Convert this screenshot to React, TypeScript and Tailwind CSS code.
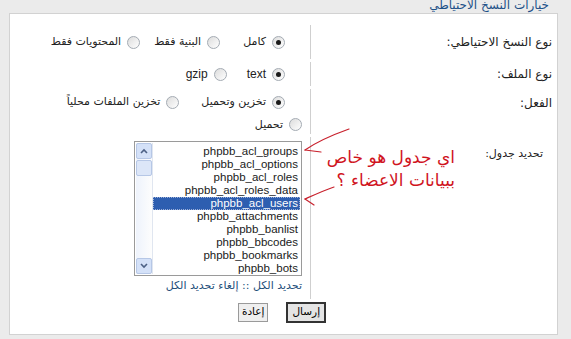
import React from "react";

const tables = [
  "phpbb_acl_groups",
  "phpbb_acl_options",
  "phpbb_acl_roles",
  "phpbb_acl_roles_data",
  "phpbb_acl_users",
  "phpbb_attachments",
  "phpbb_banlist",
  "phpbb_bbcodes",
  "phpbb_bookmarks",
  "phpbb_bots",
];

const Radio: React.FC<{ checked?: boolean }> = ({ checked }) => (
  <span className="inline-flex w-[13px] h-[13px] shrink-0 rounded-full border border-[#a4abb3] bg-gradient-to-br from-[#dcdcdc] to-white items-center justify-center">
    {checked && <span className="w-[5px] h-[5px] rounded-full bg-[#1a1a1a]" />}
  </span>
);

const Option: React.FC<{ text: string; checked?: boolean; className?: string }> = ({ text, checked, className }) => (
  <label className={"flex items-center gap-[6px] " + (className ?? "")}>
    <Radio checked={checked} />
    <span>{text}</span>
  </label>
);

// hand drawn red arrows pointing at the list
const Arrows = () => (
  <svg className="absolute left-0 top-0" width="571" height="339" viewBox="0 0 571 339" fill="none">
    <g stroke="#c8202c" strokeWidth="1.2" strokeLinecap="round">
      <path d="M349 129 C 335 134, 318 141, 305 150" />
      <path d="M305 150 L 321 152" />
      <path d="M334 187 C 325 190, 314 195, 305 199" />
      <path d="M305 199 L 314 205" />
    </g>
  </svg>
);

const App: React.FC = () => {
  return (
    <div className="relative w-[571px] h-[339px] overflow-hidden bg-[#ebebeb] font-['DejaVu_Sans',sans-serif] text-[11px] text-[#222]" dir="rtl">
      <div className="h-[13px] pr-[22px] text-[12px] leading-[14px] text-[#1d5188] -mt-[2px] mb-[2px]">
        خيارات النسخ الاحتياطي
      </div>
      <div className="mr-[13px] ml-[9px] h-[322px] bg-white border border-[#d2d2d2] flex flex-col pt-[11px]">
        {/* row 1 */}
        <div className="flex h-[34px] mb-[3px]">
          <div className="w-[247px] shrink-0 border-l border-[#cfcfcf] flex items-center pr-[5px] text-[12px]">
            نوع النسخ الاحتياطي:
          </div>
          <div className="flex items-center pr-[25px]">
            <Option text="كامل" checked className="ml-[23px]" />
            <Option text="البنية فقط" className="ml-[14px]" />
            <Option text="المحتويات فقط" />
          </div>
        </div>
        {/* row 2 */}
        <div className="flex h-[24px] mb-[3px]">
          <div className="w-[247px] shrink-0 border-l border-[#cfcfcf] flex items-center pr-[5px] text-[12px]">
            نوع الملف:
          </div>
          <div className="flex items-center pr-[25px] font-['Liberation_Sans','DejaVu_Sans',sans-serif] text-[12px]">
            <Option text="text" checked className="ml-[20px]" />
            <Option text="gzip" />
          </div>
        </div>
        {/* row 3 */}
        <div className="flex h-[45px] mb-[3px]">
          <div className="w-[247px] shrink-0 border-l border-[#cfcfcf] flex items-start pt-[5px] pr-[5px] text-[12px]">
            الفعل:
          </div>
          <div className="flex flex-col pr-[8px] pt-[5px] gap-[6px]">
            <div className="flex items-center pr-[17px]">
              <Option text="تخزين وتحميل" checked className="ml-[22px]" />
              <Option text="تخزين الملفات محلياً" />
            </div>
            <Option text="تحميل" />
          </div>
        </div>
        {/* row 4 */}
        <div className="flex">
          <div className="w-[247px] shrink-0 border-l border-[#cfcfcf] pr-[14px] pt-[9px] text-[11px]">
            تحديد جدول:
          </div>
          <div className="flex flex-col pr-[8px] pt-[4px] pb-[4px]">
            <div className="w-[168px] h-[135px] border border-[#9a9a9a] p-[1px] flex flex-row bg-white" dir="ltr">
              <div className="w-[17px] shrink-0 flex flex-col bg-gradient-to-r from-[#eef3fc] to-[#fdfdfd] border-r border-[#e0e6f0]">
                <div className="h-[16px] border border-[#b6c7e6] rounded-[2px] bg-[#d4e1f8] flex items-center justify-center">
                  <svg width="8" height="6" viewBox="0 0 8 6"><path d="M1 5 L4 2 L7 5" stroke="#4d6185" strokeWidth="1.6" fill="none" /></svg>
                </div>
                <div className="h-[16px] mt-[1px] border border-[#b6c7e6] rounded-[2px] bg-[#dce6f8]" />
                <div className="flex-1" />
                <div className="h-[16px] border border-[#b6c7e6] rounded-[2px] bg-[#d4e1f8] flex items-center justify-center">
                  <svg width="8" height="6" viewBox="0 0 8 6"><path d="M1 1 L4 4 L7 1" stroke="#4d6185" strokeWidth="1.6" fill="none" /></svg>
                </div>
              </div>
              <div className="flex-1 pt-[2px] font-['Liberation_Sans',sans-serif] text-[11.5px] leading-[13px] text-[#1a1a1a]">
                {tables.map((t) =>
                  t === "phpbb_acl_users" ? (
                    <div key={t} className="h-[13px] bg-[#2d5eb0] text-white text-right pr-[2px] outline-1 outline-dotted outline-[#9db0d8] -outline-offset-1">
                      {t}
                    </div>
                  ) : (
                    <div key={t} className="h-[13px] text-right pr-[2px]">
                      {t}
                    </div>
                  )
                )}
              </div>
            </div>
            <div className="pt-[2px] text-[11px] text-[#1f4f7a]">
              تحديد الكل :: إلغاء تحديد الكل
            </div>
          </div>
        </div>
        {/* buttons */}
        <div className="flex justify-center items-start gap-[18px] mt-[3px] mr-[3px] text-[10.5px] text-black">
          <button className="h-[21px] px-[4px] border-2 border-[#333] bg-[#e4e4e4]">إرسال</button>
          <button className="h-[19px] mt-[1px] px-[3px] border border-[#9a9a9a] bg-[#efefef]">إعادة</button>
        </div>
      </div>
      <div className="absolute right-[116px] top-[146px] text-[17px] leading-[23px] text-[#d0141e] text-right">
        <div>اي جدول هو خاص</div>
        <div>ببيانات الاعضاء ؟</div>
      </div>
      <Arrows />
    </div>
  );
};

export default App;
